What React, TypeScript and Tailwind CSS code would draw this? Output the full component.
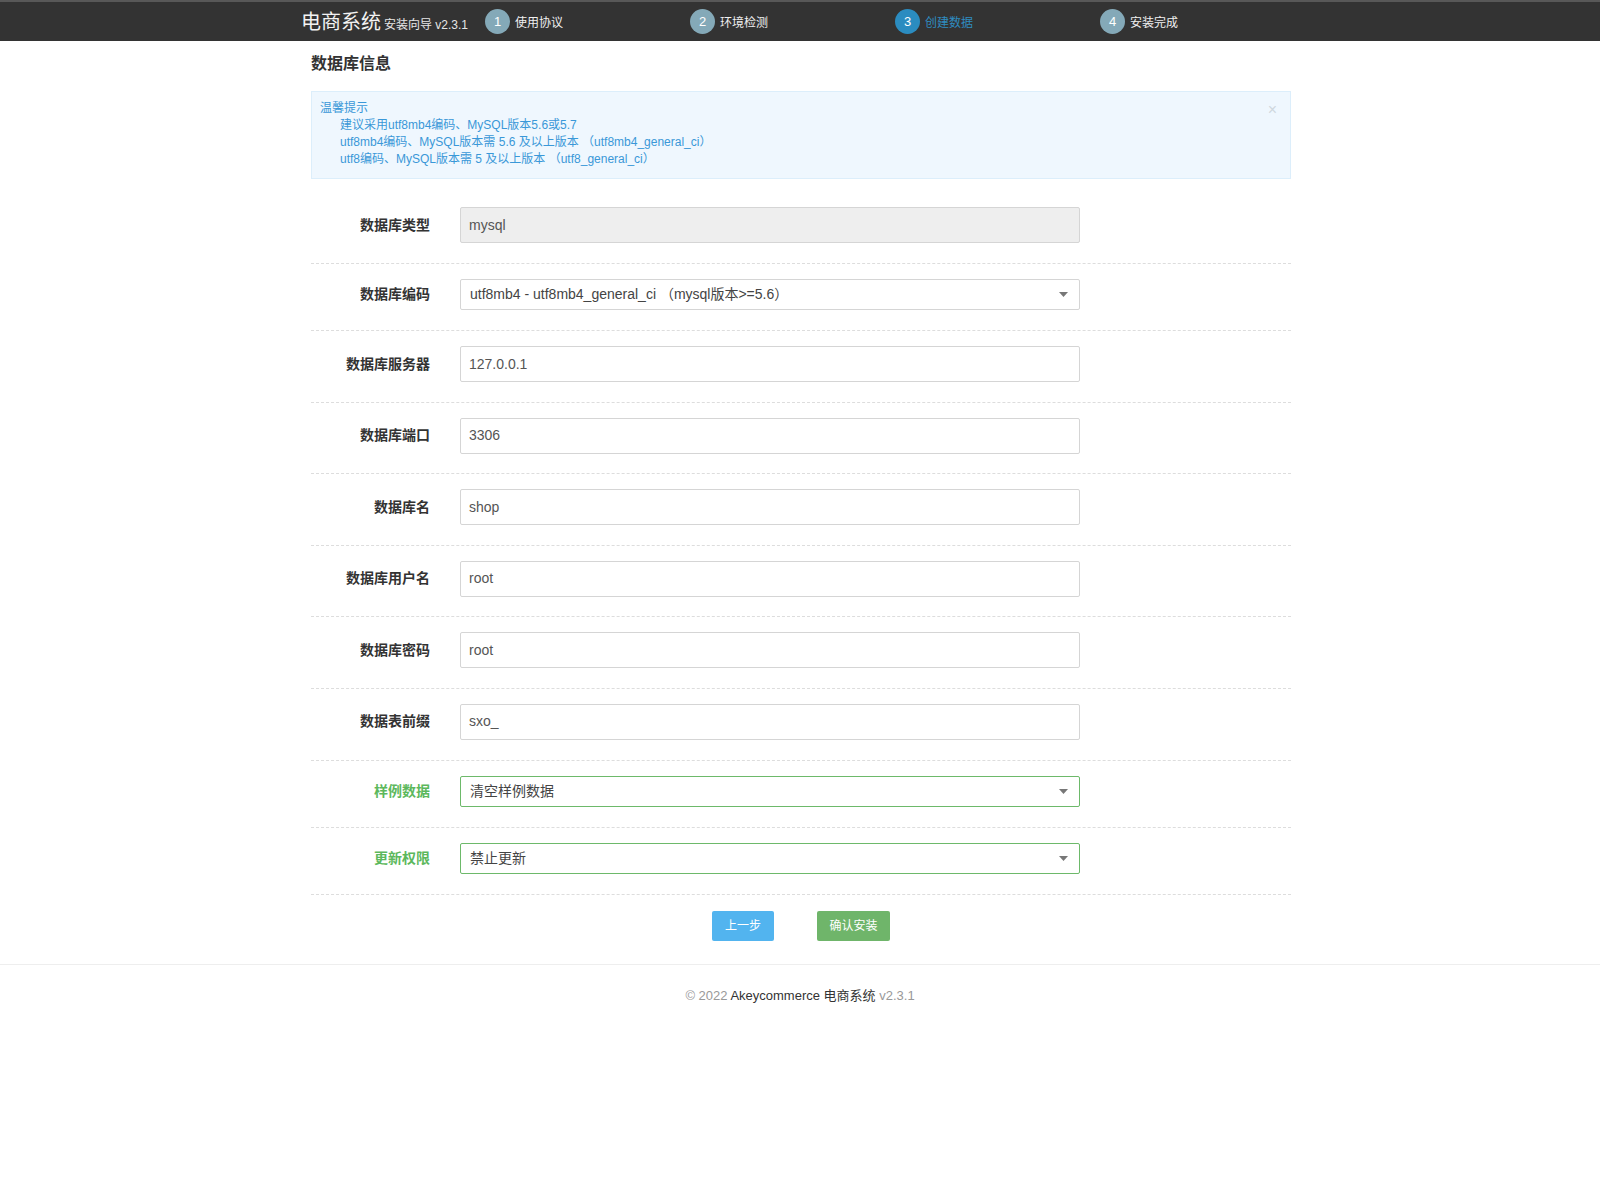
import React from "react";

const font = { fontFamily: '"Liberation Sans", "Noto Sans CJK SC", sans-serif' };

const steps = [
  { n: 1, label: "使用协议", active: false },
  { n: 2, label: "环境检测", active: false },
  { n: 3, label: "创建数据", active: true },
  { n: 4, label: "安装完成", active: false },
];

type Field = {
  label: string;
  value: string;
  kind: "input" | "disabled" | "select" | "success";
};

const fields: Field[] = [
  { label: "数据库类型", value: "mysql", kind: "disabled" },
  { label: "数据库编码", value: "utf8mb4 - utf8mb4_general_ci （mysql版本>=5.6）", kind: "select" },
  { label: "数据库服务器", value: "127.0.0.1", kind: "input" },
  { label: "数据库端口", value: "3306", kind: "input" },
  { label: "数据库名", value: "shop", kind: "input" },
  { label: "数据库用户名", value: "root", kind: "input" },
  { label: "数据库密码", value: "root", kind: "input" },
  { label: "数据表前缀", value: "sxo_", kind: "input" },
  { label: "样例数据", value: "清空样例数据", kind: "success" },
  { label: "更新权限", value: "禁止更新", kind: "success" },
];

function Caret() {
  return (
    <svg width="9" height="5" viewBox="0 0 9 5" className="ml-auto">
      <path d="M0 0 L9 0 L4.5 5 Z" fill="#777" />
    </svg>
  );
}

function Control({ field }: { field: Field }) {
  if (field.kind === "disabled") {
    return (
      <div className="flex h-[36px] w-[620px] items-center rounded-[2px] border border-[#d5d5d5] bg-[#eeeeee] px-[8px] text-[14px] text-[#555]">
        {field.value}
      </div>
    );
  }
  if (field.kind === "input") {
    return (
      <div className="flex h-[36px] w-[620px] items-center rounded-[2px] border border-[#d5d5d5] bg-white px-[8px] text-[14px] text-[#555]">
        {field.value}
      </div>
    );
  }
  const border = field.kind === "success" ? "border-[#6db96a]" : "border-[#d5d5d5]";
  return (
    <div
      className={`flex h-[31px] w-[620px] items-center rounded-[2px] border ${border} bg-white pl-[9px] pr-[11px] text-[14px] text-[#444]`}
    >
      <span>{field.value}</span>
      <Caret />
    </div>
  );
}

export default function App() {
  return (
    <div className="min-h-[1200px] bg-white text-[#333]" style={font}>
      {/* header */}
      <div className="h-[41px] border-t-2 border-[#585858] bg-[#333333]">
        <div className="mx-auto flex h-full w-[1000px] items-center">
          <div className="flex shrink-0 items-baseline whitespace-nowrap pl-[1px]">
            <span className="text-[20px] text-[#f2f2f2]">电商系统</span>
            <span className="ml-[3px] text-[12px] text-[#e6e6e6]">安装向导 v2.3.1</span>
          </div>
          <div className="ml-[17px] flex shrink-0">
            {steps.map((s) => (
              <div key={s.n} className="flex w-[205px] shrink-0 items-center whitespace-nowrap">
                <div
                  className={`flex h-[25px] w-[25px] items-center justify-center rounded-full text-[13px] text-white ${
                    s.active ? "bg-[#2b8cc0]" : "bg-[#84a9b8]"
                  }`}
                >
                  {s.n}
                </div>
                <span
                  className={`ml-[5px] mt-[2px] text-[12px] ${s.active ? "text-[#2f8cc0]" : "text-[#f0f0f0]"}`}
                >
                  {s.label}
                </span>
              </div>
            ))}
          </div>
        </div>
      </div>

      {/* content */}
      <div className="mx-auto w-[980px] translate-x-[1px] pt-[12px]">
        <h2 className="text-[16px] font-bold leading-[22px] text-[#333]">数据库信息</h2>

        <div className="relative mt-[16px] mb-[13px] border border-[#dceefb] bg-[#eff7fe] pt-[8px] pb-[10px] pl-[8px] text-[12px] leading-[17px] text-[#3a98d8]">
          <div>温馨提示</div>
          <div className="pl-[20px]">
            <div>建议采用utf8mb4编码、MySQL版本5.6或5.7</div>
            <div>utf8mb4编码、MySQL版本需 5.6 及以上版本 （utf8mb4_general_ci）</div>
            <div>utf8编码、MySQL版本需 5 及以上版本 （utf8_general_ci）</div>
          </div>
          <span className="absolute right-[13px] top-[10px] text-[16px] leading-[16px] text-[#cfd8de]">×</span>
        </div>

        {fields.map((f) => (
          <div
            key={f.label}
            className={`flex items-center border-b border-dashed border-[#dddddd] pt-[15px] ${
              f.kind === "input" ? "pb-[19.6px]" : "pb-[20px]"
            }`}
          >
            <div
              className={`w-[119px] text-right text-[14px] font-bold ${
                f.kind === "success" ? "text-[#5cb85c]" : "text-[#333]"
              }`}
            >
              {f.label}
            </div>
            <div className="ml-[30px]">
              <Control field={f} />
            </div>
          </div>
        ))}

        <div className="flex justify-center gap-[43px] pt-[16px] pb-[23px]">
          <button className="h-[30px] w-[62px] rounded-[2px] bg-[#52b4ef] text-[12px] text-white">上一步</button>
          <button className="h-[30px] w-[73px] rounded-[2px] bg-[#6fb56a] text-[12px] text-white">确认安装</button>
        </div>
      </div>

      {/* footer */}
      <div className="border-t border-[#eeeeee] pt-[21px] text-center text-[13px] text-[#999]">
        © 2022 <span className="text-[#333]">Akeycommerce 电商系统</span> v2.3.1
      </div>
    </div>
  );
}
